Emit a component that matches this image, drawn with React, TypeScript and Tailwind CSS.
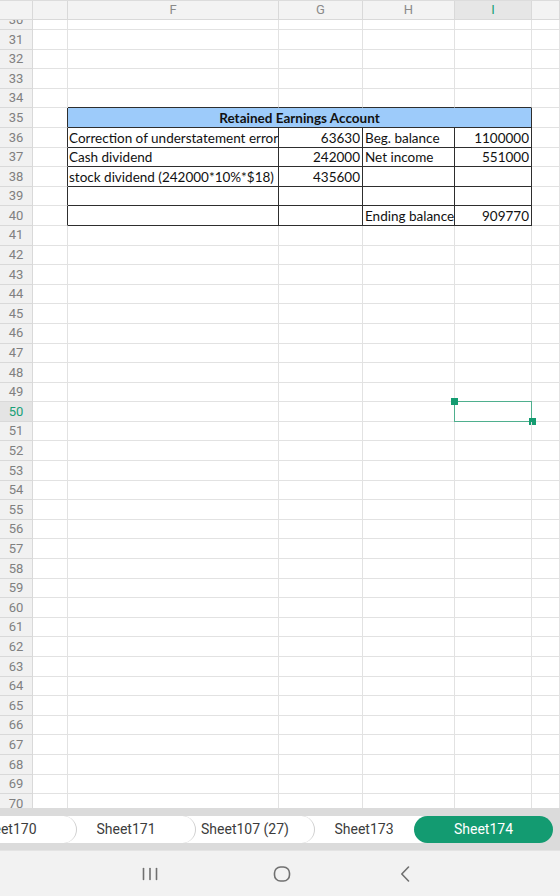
import React from "react";

type Cells = { f?: string; g?: string; h?: string; i?: string };

const table: Record<number, Cells> = {
  36: { f: "Correction of understatement error", g: "63630", h: "Beg. balance", i: "1100000" },
  37: { f: "Cash dividend", g: "242000", h: "Net income", i: "551000" },
  38: { f: "stock dividend (242000*10%*$18)", g: "435600", h: "", i: "" },
  39: { f: "", g: "", h: "", i: "" },
  40: { f: "", g: "", h: "Ending balance", i: "909770" },
};

const rows = Array.from({ length: 41 }, (_, k) => 30 + k);

const cellFont = { fontFamily: "Lato, 'Liberation Sans', sans-serif" };
const uiFont = { fontFamily: "Roboto, 'Noto Sans', sans-serif" };

function ColumnHeader() {
  const base =
    "h-full shrink-0 border-r border-b border-[#d9d9d9] flex items-center justify-center text-[13px] text-[#8a8a8a]";
  return (
    <div className="flex h-[20px] shrink-0 border-t border-[#dcdcdc] bg-[#f3f3f3]" style={uiFont}>
      <div className={`${base} w-[33px]`} />
      <div className={`${base} w-[35px]`} />
      <div className={`${base} w-[211px]`}>F</div>
      <div className={`${base} w-[84px]`}>G</div>
      <div className={`${base} w-[92px]`}>H</div>
      <div className={`${base} w-[77px] bg-[#e6e6e6] text-[#17a077]`}>I</div>
      <div className={`${base} flex-1`} />
    </div>
  );
}

function Row({ n }: { n: number }) {
  const inTable = n >= 35 && n <= 40;
  const grid = "border-r border-b border-[#e2e2e2]";
  const dark = "border-r border-b border-[#2e2e2e]";
  const active = n === 50;
  const cell = "h-full shrink-0 flex items-end overflow-hidden whitespace-nowrap text-[13.5px] leading-[15px] text-[#111] pb-[1px]";

  const label = (
    <div
      className={`h-full w-[33px] shrink-0 border-r border-b border-[#d9d9d9] flex items-center justify-center text-[13px] ${
        active ? "bg-[#e4e4e4] text-[#17a077]" : "bg-[#f1f1f1] text-[#808080]"
      }`}
      style={uiFont}
    >
      {n}
    </div>
  );

  // E column: its right edge doubles as the table's left border
  const eCol = <div className={`h-full w-[35px] shrink-0 ${inTable ? "border-b border-[#e2e2e2] border-r border-r-[#2e2e2e]" : grid}`} />;

  if (n === 35) {
    return (
      <div className="flex h-[19.6px]">
        {label}
        {eCol}
        <div
          className={`${cell} w-[464px] ${dark} bg-[#9dcbfa] justify-center font-bold`}
          style={cellFont}
        >
          Retained Earnings Account
        </div>
        <div className={`h-full flex-1 ${grid}`} />
      </div>
    );
  }

  if (inTable) {
    const c = table[n];
    return (
      <div className="flex h-[19.6px]" style={cellFont}>
        {label}
        {eCol}
        <div className={`${cell} w-[211px] ${dark} pl-[1px]`}>{c.f}</div>
        <div className={`${cell} w-[84px] ${dark} justify-end pr-[2px]`}>{c.g}</div>
        <div className={`${cell} w-[92px] ${dark} pl-[2px]`}>{c.h}</div>
        <div className={`${cell} w-[77px] ${dark} justify-end pr-[2px]`}>{c.i}</div>
        <div className={`h-full flex-1 ${grid}`} />
      </div>
    );
  }

  // row 34 sits on top of the table, so its bottom edge is the table's top border
  const topEdge = n === 34 ? "border-r border-[#e2e2e2] border-b border-b-[#2e2e2e]" : grid;

  return (
    <div className="flex h-[19.6px]">
      {label}
      <div className={`h-full w-[35px] shrink-0 ${grid}`} />
      <div className={`h-full w-[211px] shrink-0 ${topEdge}`} />
      <div className={`h-full w-[84px] shrink-0 ${topEdge}`} />
      <div className={`h-full w-[92px] shrink-0 ${topEdge}`} />
      <div className={`relative h-full w-[77px] shrink-0 ${topEdge}`}>
        {active && (
          <>
            <div className="absolute -left-[1px] -top-[1px] -right-[1px] -bottom-[1px] border border-[#4faf8e]" />
            <div className="absolute -left-[4.5px] -top-[4px] h-[7px] w-[7px] bg-[#149c71]" />
            <div className="absolute -right-[4.5px] -bottom-[4px] h-[7px] w-[7px] bg-[#149c71]" />
          </>
        )}
      </div>
      <div className={`h-full flex-1 ${grid}`} />
    </div>
  );
}

const tabs = ["Sheet170", "Sheet171", "Sheet107 (27)", "Sheet173"];

function SheetTabs() {
  return (
    <div className="h-[42px] shrink-0 overflow-hidden bg-[#dbdbdb] pt-[8px]" style={uiFont}>
      <div className="flex ml-[-62px]">
        {tabs.map((t, k) => (
          <div
            key={t}
            className={`relative h-[27px] w-[139px] shrink-0 rounded-full bg-white border-r-[1.5px] border-[#cfcfcf] flex items-center justify-center text-[14px] text-[#3c3c3c] ${
              k > 0 ? "ml-[-20px]" : ""
            }`}
            style={{ zIndex: 10 - k }}
          >
            {t}
          </div>
        ))}
        <div className="relative z-20 ml-[-20px] h-[27px] w-[139px] shrink-0 rounded-full bg-[#139b71] flex items-center justify-center text-[14px] text-white">
          Sheet174
        </div>
      </div>
    </div>
  );
}

function NavBar() {
  return (
    <div className="h-[46px] shrink-0 bg-[#f2f2f2] border-t border-[#e4e4e4] flex items-center">
      <div className="w-[560px] flex items-center">
        <div className="w-[158px] flex justify-end pr-0">
          <svg width="16" height="14" viewBox="0 0 16 14" className="ml-0">
            <g stroke="#707070" strokeWidth="1.6" strokeLinecap="round">
              <line x1="1.5" y1="1.5" x2="1.5" y2="12.5" />
              <line x1="8" y1="1.5" x2="8" y2="12.5" />
              <line x1="14.5" y1="1.5" x2="14.5" y2="12.5" />
            </g>
          </svg>
        </div>
        <div className="w-[115px]" />
        <svg width="18" height="16" viewBox="0 0 18 16">
          <rect x="1.5" y="1" width="15" height="14" rx="6" fill="none" stroke="#707070" strokeWidth="1.6" />
        </svg>
        <div className="w-[109px]" />
        <svg width="10" height="16" viewBox="0 0 10 16">
          <path d="M8.5 1 L1.8 8 L8.5 15" fill="none" stroke="#707070" strokeWidth="1.6" strokeLinecap="round" strokeLinejoin="round" />
        </svg>
      </div>
    </div>
  );
}

export default function App() {
  return (
    <div className="w-[560px] h-[896px] flex flex-col bg-white overflow-hidden">
      <ColumnHeader />
      <div className="h-[788px] shrink-0 overflow-hidden">
        <div className="mt-[-9.6px]">
          {rows.map((n) => (
            <Row key={n} n={n} />
          ))}
        </div>
      </div>
      <SheetTabs />
      <NavBar />
    </div>
  );
}
